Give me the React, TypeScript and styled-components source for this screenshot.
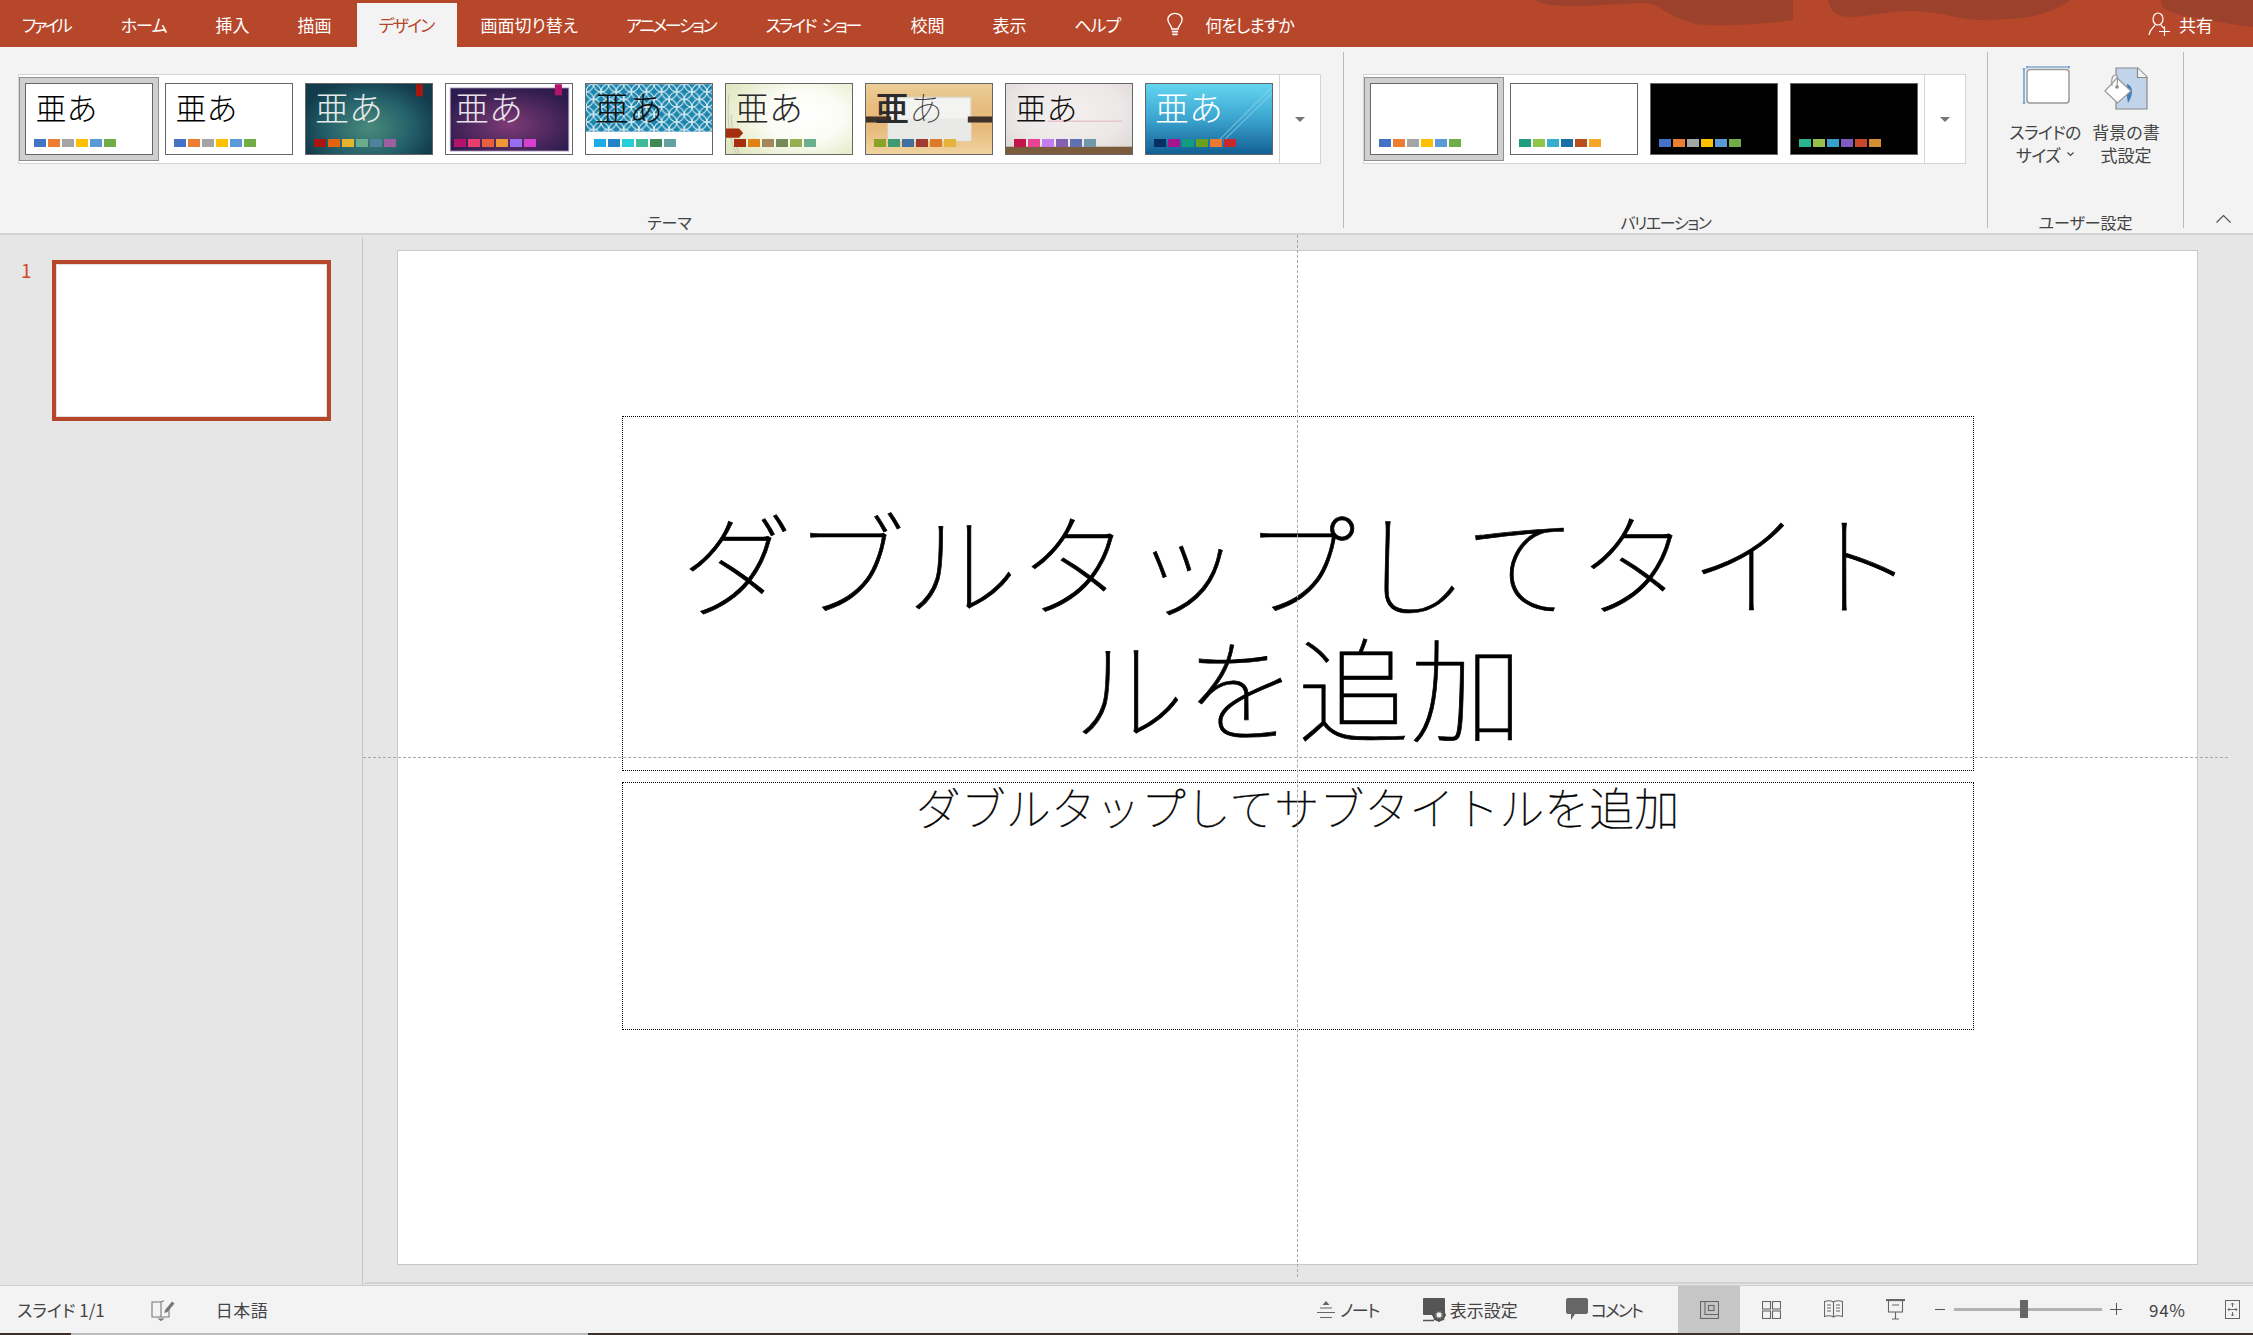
import React from 'react';
import styled, { createGlobalStyle } from 'styled-components';

const GlobalStyle = createGlobalStyle`
	html, body {
		margin: 0;
		padding: 0;
		width: 2253px;
		height: 1335px;
		overflow: hidden;
		background: #f3f3f3;
		font-family: "Noto Sans CJK JP", "Noto Sans", sans-serif;
	}
	* {
		box-sizing: border-box;
	}
`;

const Page = styled.div`
	display: flex;
	flex-direction: column;
	width: 2253px;
	height: 1335px;
`;

/* title bar */
const TitleBar = styled.header`
	position: relative;
	flex: none;
	display: flex;
	align-items: flex-end;
	height: 47px;
	background: #b7472a;
	padding-top: 3px;
`;

const TitleArt = styled.svg`
	position: absolute;
	top: 0;
	left: 0;
	width: 2253px;
	height: 47px;
`;

const Tab = styled.div<{ $active?: boolean; $spacing?: number; $first?: boolean }>`
	position: relative;
	height: 44px;
	padding: 0 ${({ $spacing }) => 24 - ($spacing ?? 0)}px 2px ${({ $first }) => ($first ? 22 : 24)}px;
	display: flex;
	align-items: center;
	font-size: 17px;
	font-feature-settings: "palt";
	letter-spacing: ${({ $spacing }) => $spacing ?? 0}px;
	word-spacing: 5px;
	white-space: pre;
	color: ${({ $active }) => ($active ? '#b7472a' : '#fff')};
	background: ${({ $active }) => ($active ? '#f3f3f3' : 'transparent')};
`;

const ActiveTab = styled(Tab)`
	margin-left: 2px;
	padding-left: 21px;
	padding-right: 23px;
`;

const TellMe = styled.div`
	position: relative;
	height: 44px;
	margin-left: 21px;
	padding-bottom: 2px;
	display: flex;
	align-items: center;
	gap: 21px;
	font-size: 17px;
	font-feature-settings: "palt";
	letter-spacing: -1px;
	color: #fff;
`;

const Share = styled.div`
	position: relative;
	height: 44px;
	margin-left: auto;
	padding: 0 40px 2px 0;
	display: flex;
	align-items: center;
	gap: 8px;
	font-size: 17px;
	color: #fff;
`;

/* ribbon */
const Ribbon = styled.section`
	flex: none;
	display: flex;
	height: 188px;
	padding-top: 5px;
	background: #f3f3f3;
	border-bottom: 2px solid #d2d2d2;
`;

const Group = styled.div<{ $width: number }>`
	flex: none;
	display: flex;
	flex-direction: column;
	width: ${({ $width }) => $width}px;
	height: 176px;
	border-right: 1px solid #b9b9b9;
`;

const Gallery = styled.div<{ $left: number }>`
	display: flex;
	align-self: flex-start;
	margin: 22px 0 0 ${({ $left }) => $left}px;
	height: 90px;
	padding-top: 2px;
	background: #fff;
	border: 1px solid #d4d4d4;
`;

const GalleryItem = styled.div<{ $selected?: boolean }>`
	flex: none;
	width: 140px;
	height: 84px;
	padding: 5px;
	background: ${({ $selected }) => ($selected ? '#cfcfcd' : 'transparent')};
	border: 1px solid ${({ $selected }) => ($selected ? '#8f8f8f' : 'transparent')};
`;

const Thumb = styled.div<{ $bg: string }>`
	position: relative;
	width: 128px;
	height: 72px;
	overflow: hidden;
	background: ${({ $bg }) => $bg};
	border: 1.5px solid #666;
`;

const ThumbArt = styled.svg`
	position: absolute;
	top: 0;
	left: 0;
	width: 100%;
	height: 100%;
`;

const Sample = styled.div<{ $color: string; $big?: boolean; $heavy?: boolean }>`
	position: relative;
	height: 46px;
	padding-left: ${({ $big }) => ($big ? 9 : 9.5)}px;
	line-height: 46px;
	font-size: ${({ $big }) => ($big ? 34 : 31)}px;
	font-weight: ${({ $heavy }) => ($heavy ? 500 : 300)};
	color: ${({ $color }) => $color};
	white-space: nowrap;
`;

const SampleKana = styled.span<{ $color: string }>`
	font-weight: 100;
	color: ${({ $color }) => $color};
`;

const Swatches = styled.div`
	position: absolute;
	left: 8px;
	top: 54.5px;
	display: flex;
	gap: 2px;
`;

const Swatch = styled.span<{ $color: string }>`
	display: block;
	width: 12px;
	height: 8px;
	background: ${({ $color }) => $color};
`;

const MoreButton = styled.div`
	flex: none;
	width: 41px;
	margin-top: -2px;
	display: flex;
	align-items: center;
	justify-content: center;
	border-left: 1px solid #d4d4d4;

	&::after {
		content: '';
		border-left: 5px solid transparent;
		border-right: 5px solid transparent;
		border-top: 5px solid #777;
	}
`;

const GroupLabel = styled.div<{ $spacing?: number; $shift?: number }>`
	margin-top: auto;
	margin-bottom: -5px;
	padding-right: ${({ $shift }) => $shift ?? 0}px;
	height: 22px;
	line-height: 22px;
	text-align: center;
	font-size: 16px;
	font-feature-settings: "palt";
	letter-spacing: ${({ $spacing }) => $spacing ?? 0}px;
	color: #444;
`;

const BigButtons = styled.div`
	display: flex;
	padding: 14px 0 0 17px;
	gap: 1px;
`;

const BigButton = styled.div`
	width: 80px;
	display: flex;
	flex-direction: column;
	align-items: center;
	font-size: 17px;
	line-height: 23px;
	text-align: center;
	font-feature-settings: "palt";
	color: #444;

	> svg {
		display: block;
		height: 52px;
		margin-bottom: 1.5px;
	}
`;

const TightLine = styled.span`
	display: flex;
	align-items: center;
	gap: 7px;
	letter-spacing: -0.7px;
`;

const Collapse = styled.svg`
	align-self: flex-end;
	margin: 0 0 10px 32px;
	flex: none;
`;

/* workspace */
const Workspace = styled.main`
	flex: 1;
	min-height: 0;
	display: flex;
	background: #e6e6e6;
`;

const SlidePane = styled.aside`
	flex: none;
	display: flex;
	width: 363px;
	margin-top: 2px;
	padding: 23px 0 0 21px;
	gap: 21px;
	border-right: 1px solid #c4c4c4;
`;

const SlideNumber = styled.div`
	width: 10px;
	font-size: 19px;
	line-height: 20px;
	color: #d24726;
`;

const SlideThumb = styled.div`
	width: 279px;
	height: 161px;
	background: #fff;
	border: 4px solid #b7472a;
	outline: 1px solid #dfdfdf;
	outline-offset: -5px;
`;

const Editor = styled.div`
	position: relative;
	flex: 1;
	padding: 15px 0 0 34px;
`;

const Footerline = styled.div`
	position: absolute;
	left: 2px;
	right: 0;
	bottom: 1px;
	height: 2px;
	background: #d2d2d2;
`;

const Slide = styled.div`
	width: 1801px;
	height: 1015px;
	padding-top: 165px;
	display: flex;
	flex-direction: column;
	align-items: center;
	gap: 11px;
	background: #fff;
	border: 1.5px solid #c8c8c8;
`;

const Placeholder = styled.div<{ $height: number }>`
	width: 1352px;
	height: ${({ $height }) => $height}px;
	display: flex;
	flex-direction: column;
	border: 1px dotted #000;
	text-align: center;
	color: #000;
`;

const TitleText = styled.div`
	margin-top: auto;
	padding: 0 24px 24px;
	font-size: 112.5px;
	line-height: 125px;
	font-weight: 100;
	-webkit-text-stroke: 0.7px #000;
`;

const SubtitleText = styled.div`
	font-size: 45px;
	line-height: 48px;
	font-weight: 100;
	-webkit-text-stroke: 0.4px #000;
`;

const GuideV = styled.div`
	position: absolute;
	left: 934px;
	top: 0;
	bottom: 8px;
	border-left: 1px dashed #a8a8a8;
`;

const GuideH = styled.div`
	position: absolute;
	left: 0;
	width: 1865px;
	top: 522px;
	border-top: 1px dashed #a8a8a8;
`;

/* status bar */
const StatusBar = styled.footer`
	flex: none;
	display: flex;
	align-items: center;
	height: 48px;
	padding-left: 17px;
	background: #f3f3f3;
	border-top: 1px solid #cfcfcf;
	font-size: 17px;
	color: #444;
`;

const StatusText = styled.span<{ $palt?: boolean; $spacing?: number }>`
	font-feature-settings: ${({ $palt }) => ($palt ? '"palt"' : 'normal')};
	letter-spacing: ${({ $spacing }) => $spacing ?? 0}px;
	white-space: pre;
`;

const StatusItem = styled.div<{ $left: number }>`
	display: flex;
	align-items: center;
	gap: 3px;
	margin-left: ${({ $left }) => $left}px;
`;

const StatusRight = styled.div`
	display: flex;
	align-items: center;
	align-self: stretch;
	margin-left: auto;
	padding-right: 13px;
`;

const ViewButton = styled.div<{ $active?: boolean; $left?: number }>`
	flex: none;
	align-self: stretch;
	width: 62px;
	margin-left: ${({ $left }) => $left ?? 0}px;
	display: flex;
	align-items: center;
	justify-content: center;
	background: ${({ $active }) => ($active ? '#c6c6c6' : 'transparent')};
`;

const ZoomSlider = styled.div`
	position: relative;
	flex: none;
	width: 148px;
	height: 3px;
	margin: 0 8px 0 9px;
	background: #b2b2b2;
`;

const ZoomThumb = styled.div`
	position: absolute;
	left: 66px;
	top: -8px;
	width: 8px;
	height: 18px;
	background: #666;
`;

const ZoomSign = styled.div`
	flex: none;
	width: 10px;
	height: 1.5px;
	margin-left: 9px;
	background: #555;
`;

const ZoomPlus = styled.div`
	position: relative;
	flex: none;
	width: 12px;
	height: 1.5px;
	background: #555;

	&::after {
		content: '';
		position: absolute;
		left: 5.5px;
		top: -5.5px;
		width: 1.5px;
		height: 12px;
		background: #555;
	}
`;

const ZoomPercent = styled.div`
	width: 40px;
	margin-left: 27px;
	font-size: 17px;
	letter-spacing: 0.7px;
	white-space: nowrap;
`;

const TaskStrip = styled.div`
	flex: none;
	height: 2px;
	display: flex;
	background: #3b2f2a;
`;

const TaskGap = styled.div`
	margin-left: 71px;
	width: 517px;
	background: #bcbcbc;
`;

const TABS = [
	{ label: 'ファイル', spacing: -2.7, first: true },
	{ label: 'ホーム', spacing: -1 },
	{ label: '挿入', spacing: 0 },
	{ label: '描画', spacing: 0 },
	{ label: 'デザイン', spacing: -1.8, active: true },
	{ label: '画面切り替え', spacing: 0 },
	{ label: 'アニメーション', spacing: -2.4 },
	{ label: 'スライド ショー', spacing: -2.2 },
	{ label: '校閲', spacing: 0 },
	{ label: '表示', spacing: 0 },
	{ label: 'ヘルプ', spacing: -1 },
];

const OFFICE = ['#4472c4', '#ed7d31', '#a5a5a5', '#ffc000', '#5b9bd5', '#70ad47'];

const THEMES = [
	{ bg: '#fff', color: '#000', big: false, swatches: OFFICE, art: null },
	{ bg: '#fff', color: '#000', big: false, swatches: OFFICE, art: null },
	{
		bg: 'radial-gradient(ellipse 55% 70% at 50% 62%, #4a8a7c 0%, #25616a 60%, #123c4c 100%)',
		color: '#e6eae8',
		big: true,
		swatches: ['#a81610', '#e3640f', '#e6b52d', '#6aac8c', '#51829c', '#9c5fa0'],
		art: <rect x="109" y="0" width="7" height="12" fill="#a5170f" />,
	},
	{
		bg: '#fff',
		color: '#e8e2e8',
		big: true,
		swatches: ['#b3136b', '#e73e6f', '#e5603c', '#ee9638', '#9a6cf0', '#d63fd0'],
		art: (
			<>
				<defs>
					<radialGradient id="plum" cx="50%" cy="58%" r="60%">
						<stop offset="0%" stopColor="#7e3a76" />
						<stop offset="100%" stopColor="#2e1c4e" />
					</radialGradient>
				</defs>
				<rect x="4" y="3.5" width="118" height="63" fill="url(#plum)" stroke="#ddd3e4" strokeWidth="1" />
				<rect x="108" y="0" width="7" height="11" fill="#b6146c" />
			</>
		),
	},
	{
		bg: '#fff',
		color: '#111',
		big: true,
		swatches: ['#1cade4', '#2683c6', '#27ced7', '#42ba97', '#3e8853', '#62a39f'],
		art: (
			<>
				<defs>
					<pattern id="shippo" width="15" height="15" patternUnits="userSpaceOnUse">
						<circle cx="7.5" cy="7.5" r="7.5" fill="none" stroke="#e4f1f6" strokeWidth="1" />
						<circle cx="0" cy="0" r="7.5" fill="none" stroke="#e4f1f6" strokeWidth="1" />
						<circle cx="15" cy="0" r="7.5" fill="none" stroke="#e4f1f6" strokeWidth="1" />
						<circle cx="0" cy="15" r="7.5" fill="none" stroke="#e4f1f6" strokeWidth="1" />
						<circle cx="15" cy="15" r="7.5" fill="none" stroke="#e4f1f6" strokeWidth="1" />
					</pattern>
				</defs>
				<rect x="0" y="0" width="126" height="47" fill="#1a85ad" />
				<rect x="0" y="0" width="126" height="47" fill="url(#shippo)" />
			</>
		),
	},
	{
		bg: 'radial-gradient(ellipse 70% 80% at 62% 45%, #fff 0%, #fbfcf4 45%, #dfe7bf 100%)',
		color: '#2a2a2a',
		big: true,
		swatches: ['#a5300f', '#e08317', '#a5855b', '#738a5a', '#98af4f', '#6ab08f'],
		art: (
			<>
				<path d="M3 10C1 30 2 55 11 70M5 30C6 45 8 60 14 70" fill="none" stroke="#c9c8b0" strokeWidth="1" />
				<path d="M0 44H13L17 48.5L13 53H0Z" fill="#a5300f" />
			</>
		),
	},
	{
		bg: 'linear-gradient(180deg, #eccf98 0%, #e8bd80 30%, #e6b87a 60%, #efd39e 100%)',
		color: '#2b2b2b',
		big: true,
		heavy: true,
		kana: '#3a3a3a',
		swatches: ['#8ca128', '#3f9a74', '#42709e', '#a13b32', '#dd7a2a', '#e3b33c'],
		art: (
			<>
				<rect x="22" y="13" width="82" height="43" fill="#f3f3f1" stroke="#dcd8cc" strokeWidth="1.5" />
				<rect x="22" y="34" width="82" height="22" fill="#e9e9e7" />
				<rect x="0" y="32" width="25" height="6" fill="#3d3129" />
				<rect x="101" y="32" width="25" height="6" fill="#3d3129" />
			</>
		),
	},
	{
		bg: 'radial-gradient(ellipse 70% 80% at 50% 40%, #f4f0f0 0%, #ede8e8 60%, #dbd5d3 100%)',
		color: '#111',
		big: false,
		swatches: ['#c2154a', '#e74592', '#c27cf0', '#8460b5', '#6070b0', '#7098a8'],
		art: (
			<>
				<rect x="41" y="36" width="74" height="1.5" fill="#eac4cc" />
				<rect x="0" y="62" width="126" height="8" fill="#7a5c3c" />
			</>
		),
	},
	{
		bg: 'linear-gradient(180deg, #63d5f1 0%, #3ba4cf 50%, #125f94 100%)',
		color: '#fff',
		big: true,
		swatches: ['#052f61', '#a5158c', '#159b80', '#68a11e', '#ea7a30', '#c8282c'],
		art: <path d="M72 56L126 2M77 56L126 8" fill="none" stroke="#9ad8ea" strokeOpacity=".6" strokeWidth="1.2" />,
	},
];

const VARIATIONS = [
	{ bg: '#fff', swatches: OFFICE },
	{ bg: '#fff', swatches: ['#1f9e7e', '#8ec54a', '#35aed0', '#1b6fa8', '#b94e1c', '#f5a623'] },
	{ bg: '#000', swatches: OFFICE },
	{ bg: '#000', swatches: ['#2ab38f', '#97c04a', '#38a0c8', '#7d5bc0', '#c8482a', '#d68f30'] },
];

const SwatchRow = ({ colors }: { colors: string[] }) => (
	<Swatches>
		{colors.map((c, i) => (
			<Swatch key={i} $color={c} />
		))}
	</Swatches>
);

const BulbIcon = () => (
	<svg width="18" height="25" viewBox="0 0 20 28" fill="none" stroke="#fff" strokeWidth="1.5">
		<path d="M6.5 19C6.5 15 2 13 2 8.5C2 4.5 5.5 1.5 10 1.5C14.5 1.5 18 4.5 18 8.5C18 13 13.5 15 13.5 19Z" />
		<path d="M6.5 22H13.5M7 25H13" strokeWidth="2" />
	</svg>
);

const PersonIcon = () => (
	<svg width="23" height="24" viewBox="0 0 23 24" fill="none" stroke="#fff" strokeWidth="1.2">
		<ellipse cx="10" cy="7" rx="5" ry="6" />
		<path d="M7 12.5C6.5 16 2 16 1 23M13 12.5C13.3 14.5 15 15.5 17 16.5" />
		<path d="M11 19.5H22M16.5 14.5V24" />
	</svg>
);

const SlideSizeIcon = () => (
	<svg width="52" height="52" viewBox="0 0 52 52" fill="none">
		<path d="M8 1H50M8 0V2.5M50 0V2.5" stroke="#4a86c5" strokeWidth="1.2" />
		<path d="M5 3V37M3.5 3H6.5M3.5 37H6.5" stroke="#4a86c5" strokeWidth="1.2" />
		<rect x="8" y="3.5" width="42" height="33.5" rx="3" fill="#fff" stroke="#999" strokeWidth="1.5" />
	</svg>
);

const BackgroundIcon = () => (
	<svg width="46" height="52" viewBox="0 0 46 52" fill="none">
		<path d="M13 9V2H35L44 11V43H13V33" fill="#c2d4e9" stroke="#8a8a8a" strokeWidth="1.2" />
		<path d="M34.5 2V11.5H44" fill="#f3f3f3" stroke="#8a8a8a" strokeWidth="1.2" />
		<path d="M24 18C30 20 31 28 25 37C24 32 23 26 24 18Z" fill="#3f7fbd" />
		<path d="M14 12L28 25L14.5 37L2 25Z" fill="#fff" stroke="#999" strokeWidth="1.2" />
		<path d="M9 20C8 13 9 9 13 9C16 9 14 16 14 20" stroke="#999" strokeWidth="1.2" />
		<circle cx="14" cy="21" r="1.8" fill="#8a8a8a" />
	</svg>
);

const NotesEditIcon = () => (
	<svg width="24" height="22" viewBox="0 0 24 22" fill="none" stroke="#777" strokeWidth="1.1">
		<path d="M10 3H1V18H10V3M10 3C11 2 11.5 2 13 2M10 18H18V8M8 20H12L10 21.5Z" />
		<path d="M14 11L21 2.5L23.5 4.5L16.5 13L13.5 14Z" fill="#777" stroke="none" />
	</svg>
);

const NotesIcon = () => (
	<svg width="18" height="20" viewBox="0 0 18 20" fill="none" stroke="#666" strokeWidth="1.2">
		<path d="M5.5 5L9 1L12.5 5Z" fill="#666" stroke="none" />
		<path d="M3 8H15M0 12.5H18M3 17.5H15" />
	</svg>
);

const DisplayIcon = () => (
	<svg width="24" height="24" viewBox="0 0 24 24">
		<rect x="0" y="0" width="22" height="17" rx="1" fill="#555" />
		<path d="M0 22.5H11" stroke="#555" strokeWidth="1.5" />
		<circle cx="16" cy="17" r="5" fill="#f3f3f3" stroke="#555" strokeWidth="3" />
		<path d="M16 9.5V24M9 17H23M11 12L21 22M21 12L11 22" stroke="#555" strokeWidth="1.6" />
		<circle cx="16" cy="17" r="2.4" fill="#f3f3f3" />
	</svg>
);

const CommentIcon = () => (
	<svg width="22" height="24" viewBox="0 0 22 24">
		<path d="M2 0H20C21 0 22 1 22 2V14C22 15 21 16 20 16H9L5 22V16H2C1 16 0 15 0 14V2C0 1 1 0 2 0Z" fill="#666" />
	</svg>
);

const NormalIcon = () => (
	<svg width="19" height="18" viewBox="0 0 19 18" fill="none" stroke="#666" strokeWidth="1.1">
		<rect x=".5" y=".5" width="18" height="17" />
		<path d="M5 .5V13.5H18.5" />
		<rect x="8.5" y="4.5" width="5.5" height="5" />
	</svg>
);

const SorterIcon = () => (
	<svg width="19" height="18" viewBox="0 0 19 18" fill="none" stroke="#666" strokeWidth="1.1">
		<rect x=".5" y=".5" width="8" height="7.5" />
		<rect x="10.5" y=".5" width="8" height="7.5" />
		<rect x=".5" y="10" width="8" height="7.5" />
		<rect x="10.5" y="10" width="8" height="7.5" />
	</svg>
);

const ReadingIcon = () => (
	<svg width="19" height="19" viewBox="0 0 19 19" fill="none" stroke="#666" strokeWidth="1.1">
		<path d="M.5 1.5C4 .5 7 .5 9.5 2C12 .5 15 .5 18.5 1.5V16.5C15 15.5 12 15.5 9.5 17C7 15.5 4 15.5 .5 16.5Z" />
		<path d="M9.5 2V17M3 5H7M3 8H7M3 11H7M12 5H16M12 8H16M12 11H16" />
	</svg>
);

const ShowIcon = () => (
	<svg width="19" height="21" viewBox="0 0 19 21" fill="none" stroke="#666" strokeWidth="1.1">
		<path d="M0 1H19" strokeWidth="2.2" />
		<rect x="2.5" y="1" width="14" height="12" />
		<path d="M6 6H13M9.5 13V20M6 20H13" />
	</svg>
);

const FitIcon = () => (
	<svg width="15" height="19" viewBox="0 0 15 19" fill="none" stroke="#666" strokeWidth="1">
		<rect x=".5" y=".5" width="14" height="18" />
		<path d="M7.5 3V7M6 4.5L7.5 3L9 4.5M7.5 16V12M6 14.5L7.5 16L9 14.5M3 9.5H12M4.5 8L3 9.5L4.5 11M10.5 8L12 9.5L10.5 11" />
	</svg>
);

const SmallChevron = () => (
	<svg width="7" height="5" viewBox="0 0 7 5" fill="none" stroke="#444" strokeWidth="1.1">
		<path d="M.5 .5L3.5 3.5L6.5 .5" />
	</svg>
);

export default function App() {
	return (
		<Page>
			<GlobalStyle />
			<TitleBar>
				<TitleArt viewBox="0 0 2253 47">
					<path
						d="M1534 0C1550 9 1585 6 1640 3C1665 4 1660 14 1696 24C1720 27 1770 24 1793 20L1793 0Z M1828 0C1830 12 1838 18 1855 17C1885 14 1900 9 1926 12C1950 14 1965 21 1984 20C2010 19 2030 18 2041 14C2055 9 2065 5 2070 0Z M2162 0C2158 8 2170 14 2197 18C2220 22 2240 26 2253 27L2253 0Z"
						fill="#9c412b"
					/>
				</TitleArt>
				{TABS.map(t =>
					t.active ? (
						<ActiveTab key={t.label} $active $spacing={t.spacing}>
							{t.label}
						</ActiveTab>
					) : (
						<Tab key={t.label} $spacing={t.spacing} $first={t.first}>
							{t.label}
						</Tab>
					),
				)}
				<TellMe>
					<BulbIcon />
					何をしますか
				</TellMe>
				<Share>
					<PersonIcon />
					共有
				</Share>
			</TitleBar>

			<Ribbon>
				<Group $width={1344}>
					<Gallery $left={18}>
						{THEMES.map((t, i) => (
							<GalleryItem key={i} $selected={i === 0}>
								<Thumb $bg={t.bg}>
									{t.art && <ThumbArt viewBox="0 0 125 69">{t.art}</ThumbArt>}
									<Sample $color={t.color} $big={t.big} $heavy={t.heavy}>
										亜{t.kana ? <SampleKana $color={t.kana}>あ</SampleKana> : 'あ'}
									</Sample>
									<SwatchRow colors={t.swatches} />
								</Thumb>
							</GalleryItem>
						))}
						<MoreButton />
					</Gallery>
					<GroupLabel $shift={4}>テーマ</GroupLabel>
				</Group>
				<Group $width={644}>
					<Gallery $left={19}>
						{VARIATIONS.map((v, i) => (
							<GalleryItem key={i} $selected={i === 0}>
								<Thumb $bg={v.bg}>
									<SwatchRow colors={v.swatches} />
								</Thumb>
							</GalleryItem>
						))}
						<MoreButton />
					</Gallery>
					<GroupLabel $spacing={-1.4}>バリエーション</GroupLabel>
				</Group>
				<Group $width={196}>
					<BigButtons>
						<BigButton>
							<SlideSizeIcon />
							<TightLine>スライドの</TightLine>
							<TightLine>
								サイズ
								<SmallChevron />
							</TightLine>
						</BigButton>
						<BigButton>
							<BackgroundIcon />
							<span>背景の書</span>
							<span>式設定</span>
						</BigButton>
					</BigButtons>
					<GroupLabel>ユーザー設定</GroupLabel>
				</Group>
				<Collapse width="15" height="8" viewBox="0 0 15 8" fill="none" stroke="#555" strokeWidth="1.2">
					<path d="M.5 7.5L7.5 .5L14.5 7.5" />
				</Collapse>
			</Ribbon>

			<Workspace>
				<SlidePane>
					<SlideNumber>1</SlideNumber>
					<SlideThumb />
				</SlidePane>
				<Editor>
					<Slide>
						<Placeholder $height={355}>
							<TitleText>ダブルタップしてタイトルを追加</TitleText>
						</Placeholder>
						<Placeholder $height={248}>
							<SubtitleText>ダブルタップしてサブタイトルを追加</SubtitleText>
						</Placeholder>
					</Slide>
					<GuideV />
					<GuideH />
					<Footerline />
				</Editor>
			</Workspace>

			<StatusBar>
				<StatusText $palt>スライド 1/1</StatusText>
				<StatusItem $left={46}>
					<NotesEditIcon />
				</StatusItem>
				<StatusItem $left={41}>
					<StatusText $spacing={0.5}>日本語</StatusText>
				</StatusItem>
				<StatusRight>
					<StatusItem $left={0}>
						<NotesIcon />
						<StatusText $palt $spacing={-1.5}> ノート</StatusText>
					</StatusItem>
					<StatusItem $left={44}>
						<DisplayIcon />
						<StatusText $palt>表示設定</StatusText>
					</StatusItem>
					<StatusItem $left={48}>
						<CommentIcon />
						<StatusText $palt $spacing={-2}>コメント</StatusText>
					</StatusItem>
					<ViewButton $active $left={36}>
						<NormalIcon />
					</ViewButton>
					<ViewButton>
						<SorterIcon />
					</ViewButton>
					<ViewButton>
						<ReadingIcon />
					</ViewButton>
					<ViewButton>
						<ShowIcon />
					</ViewButton>
					<ZoomSign />
					<ZoomSlider>
						<ZoomThumb />
					</ZoomSlider>
					<ZoomPlus />
					<ZoomPercent>94%</ZoomPercent>
					<StatusItem $left={36}>
						<FitIcon />
					</StatusItem>
				</StatusRight>
			</StatusBar>
			<TaskStrip>
				<TaskGap />
			</TaskStrip>
		</Page>
	);
}
